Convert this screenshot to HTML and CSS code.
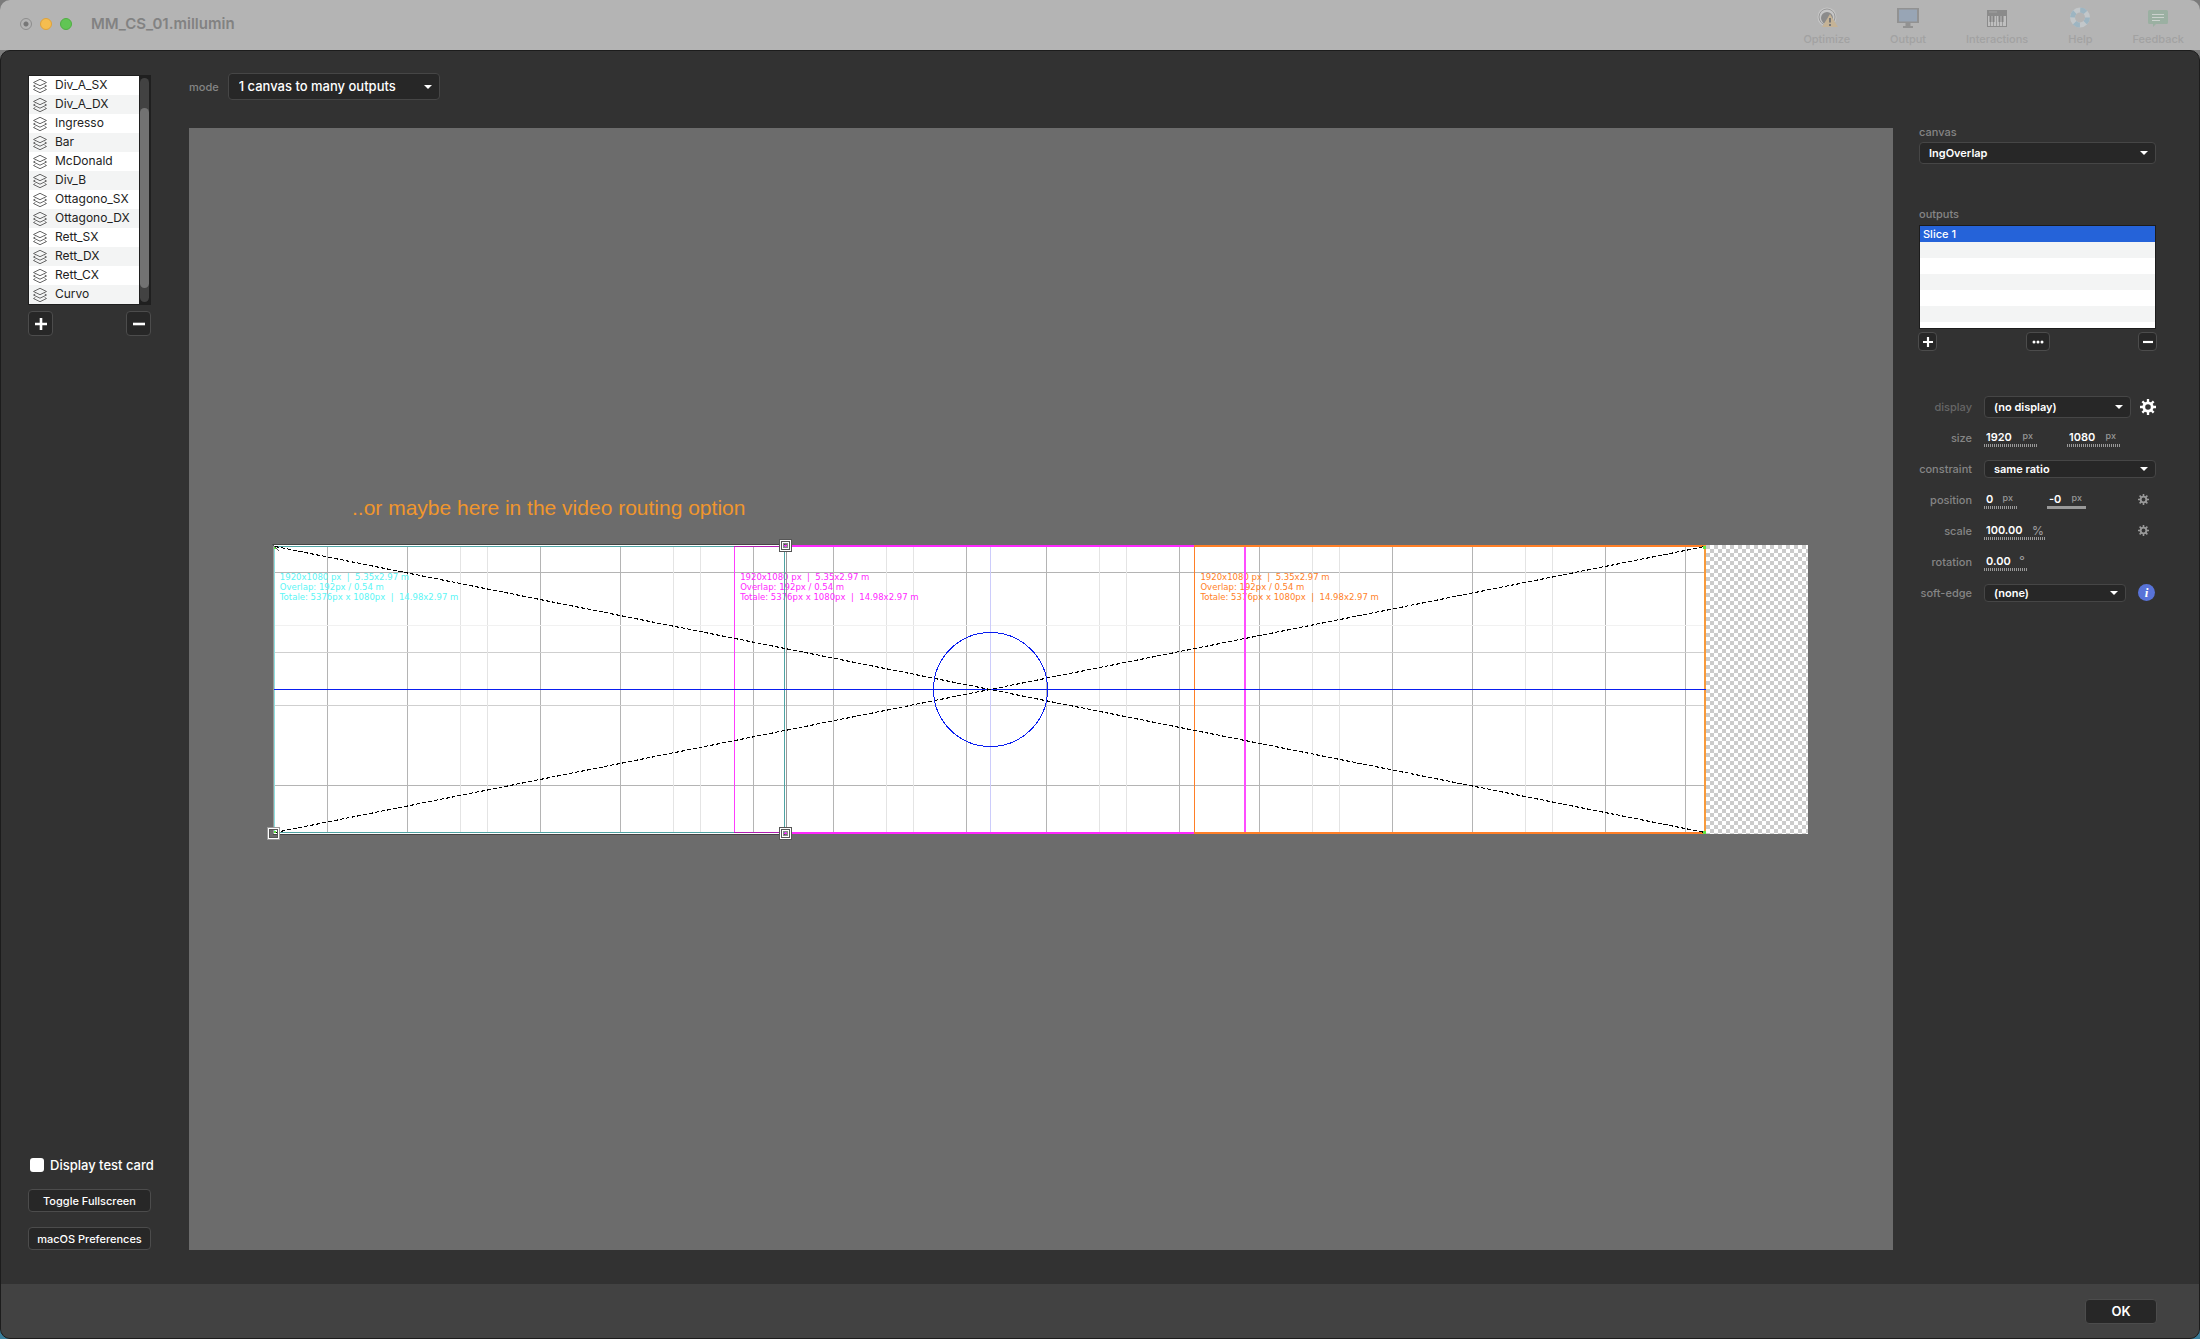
FILE: index.html
```html
<!DOCTYPE html>
<html lang="en">
<head>
<meta charset="utf-8">
<title>MM_CS_01.millumin</title>
<link rel="stylesheet" href="styles.css">
</head>
<body>
<svg class="defs" width="0" height="0" aria-hidden="true">
  <defs>
    <symbol id="layers" viewBox="0 0 16 16">
      <g fill="none" stroke="#666" stroke-width="1">
        <path d="M8 1.300l6.500 3.200L8 7.700 1.500 4.500z"/>
        <path d="M3.300 7L1.500 8 8 11.200 14.500 8l-1.800-1"/>
        <path d="M3.300 10.500l-1.800 1L8 14.700l6.500-3.200-1.800-1"/>
      </g>
    </symbol>
    <symbol id="plus" viewBox="0 0 12 12"><path d="M6 0v12M0 6h12" stroke="#fff" stroke-width="2.600"/></symbol>
    <symbol id="minus" viewBox="0 0 12 12"><path d="M0 6h12" stroke="#fff" stroke-width="2.600"/></symbol>
    <symbol id="gear" viewBox="0 0 16 16">
      <circle cx="8" cy="8" r="4.200" fill="none" stroke="currentColor" stroke-width="2.800"/>
      <path d="M8 0v3M8 13v3M0 8h3M13 8h3M2.340 2.340l2.200 2.200M11.460 11.460l2.200 2.200M13.660 2.340l-2.200 2.200M4.540 11.460l-2.200 2.200" stroke="currentColor" stroke-width="2.300"/>
    </symbol>
    <pattern id="checker" width="8" height="8" patternUnits="userSpaceOnUse">
      <rect width="8" height="8" fill="#fff"/>
      <path d="M0 0h4v4H0zM4 4h4v4H4z" fill="#cbcbcb"/>
    </pattern>
    <symbol id="handle" viewBox="0 0 13 13">
      <g shape-rendering="crispEdges" fill="none">
        <rect x=".5" y=".5" width="12" height="12" stroke="#555"/>
        <rect x="1.500" y="1.500" width="10" height="10" stroke="#fff"/>
        <rect x="2.500" y="2.500" width="8" height="8" stroke="#555"/>
        <rect x="3.500" y="3.500" width="6" height="6" stroke="#fff"/>
        <rect x="4.500" y="4.500" width="4" height="4" stroke="#888"/>
      </g>
    </symbol>
    <symbol id="handle-pale" viewBox="0 0 13 13">
      <g shape-rendering="crispEdges" fill="none">
        <rect x=".5" y=".5" width="12" height="12" stroke="#999"/>
        <rect x="1.500" y="1.500" width="10" height="10" stroke="#fff"/>
        <rect x="2.500" y="2.500" width="8" height="8" stroke="#555"/>
      </g>
    </symbol>
  </defs>
</svg>

<header class="titlebar">
  <div class="lights"><span class="light light-close"></span><span class="light light-min"></span><span class="light light-max"></span></div>
  <h1 class="doc-title">MM_CS_01.millumin</h1>
  <nav class="toolbar">
    <button class="tool" disabled>
      <svg width="24" height="22" viewBox="0 0 24 22"><circle cx="12" cy="10" r="9.500" fill="#c6c6c6"/><circle cx="12" cy="10" r="8" fill="none" stroke="#999" stroke-width="1"/><circle cx="12" cy="11" r="6" fill="#8b8b8b"/><path d="M15 7l8 13H7z" fill="#c5b396"/><path d="M15 11v4.500M15 17v2" stroke="#777" stroke-width="2"/></svg>
      Optimize
    </button>
    <button class="tool" disabled>
      <svg width="24" height="22" viewBox="0 0 24 22"><path d="M1 1h22v15H1z" fill="#929292"/><path d="M3 2.500h18v12H3z" fill="#98a5b5"/><path d="M9.500 16h5v3h2.500v2H7v-2h2.500z" fill="#929292"/></svg>
      Output
    </button>
    <button class="tool" disabled>
      <svg width="24" height="22" viewBox="0 0 24 22"><path d="M2 3h20v17H2z" fill="#8b8b8b"/><path d="M4 5h8" stroke="#a2a2a2"/><path d="M3 9h18v10H3z" fill="#bfbfbf"/><path d="M5.500 9v10M8.500 9v10M11.500 9v10M14.500 9v10M17.500 9v10" stroke="#999"/><path d="M5.500 9v6M8.500 9v6M14.500 9v6M17.500 9v6" stroke="#858585" stroke-width="2"/></svg>
      Interactions
    </button>
    <button class="tool" disabled>
      <svg width="24" height="22" viewBox="0 0 24 22"><circle cx="12" cy="10.500" r="7.500" fill="none" stroke="#c2c7ca" stroke-width="5"/><circle cx="12" cy="10.500" r="7.500" fill="none" stroke="#9db5c2" stroke-width="5" stroke-dasharray="5.890 5.890"/></svg>
      Help
    </button>
    <button class="tool" disabled>
      <svg width="24" height="22" viewBox="0 0 24 22"><path d="M3.500 3h17q1.500 0 1.500 1.500v11q0 1.500-1.500 1.500H10l-3 3v-3H3.500Q2 17 2 15.500v-11Q2 3 3.500 3z" fill="#9bb0a2"/><path d="M6 7.500h12M6 10.500h12M6 13.500h8" stroke="#ccd2ce"/></svg>
      Feedback
    </button>
  </nav>
</header>

<div class="sheet">
  <div class="workspace">
    <aside class="sidebar">
      <div class="layer-box">
        <ul class="layers">
          <li><svg><use href="#layers"/></svg>Div_A_SX</li>
          <li><svg><use href="#layers"/></svg>Div_A_DX</li>
          <li><svg><use href="#layers"/></svg>Ingresso</li>
          <li><svg><use href="#layers"/></svg>Bar</li>
          <li><svg><use href="#layers"/></svg>McDonald</li>
          <li><svg><use href="#layers"/></svg>Div_B</li>
          <li><svg><use href="#layers"/></svg>Ottagono_SX</li>
          <li><svg><use href="#layers"/></svg>Ottagono_DX</li>
          <li><svg><use href="#layers"/></svg>Rett_SX</li>
          <li><svg><use href="#layers"/></svg>Rett_DX</li>
          <li><svg><use href="#layers"/></svg>Rett_CX</li>
          <li><svg><use href="#layers"/></svg>Curvo</li>
        </ul>
        <div class="scroll-track"><div class="scroll-thumb"></div></div>
      </div>
      <div class="button-row">
        <button class="btn btn-square" aria-label="Add canvas"><svg width="12" height="12"><use href="#plus"/></svg></button>
        <button class="btn btn-square" aria-label="Remove canvas"><svg width="12" height="12"><use href="#minus"/></svg></button>
      </div>
      <div class="sidebar-foot">
        <label class="check"><input type="checkbox">Display test card</label>
        <button class="btn btn-wide">Toggle Fullscreen</button>
        <button class="btn btn-wide">macOS Preferences</button>
      </div>
    </aside>

    <main class="center">
      <div class="mode">
        <label class="caption" for="mode">mode</label>
        <span class="select select-mode"><select id="mode"><option>1 canvas to many outputs</option></select></span>
      </div>
      <div class="stage">
        <div class="card">
          <p class="note">..or maybe here in the video routing option</p>
          <svg class="card-art" viewBox="0 0 1534 289">
            <g shape-rendering="crispEdges">
              <rect x="1432" width="102" height="289" fill="url(#checker)"/>
              <rect width="1432" height="289" fill="#fff"/>
              <g fill="none" stroke="#b4b4b4">
                <path d="M0 27.500h1432M0 240.500h1432"/>
                <path d="M53.500 1v287M133.500 1v287M266.500 1v287M346.500 1v287M479.500 1v287M559.500 1v287M692.500 1v287M772.500 1v287M905.500 1v287M985.500 1v287M1118.500 1v287M1198.500 1v287M1331.500 1v287M1411.500 1v287"/>
                <path stroke="#cfcfcf" d="M0 107.500h1432M0 160.500h1432"/>
                <path stroke="#e4e4e4" d="M186.500 1v287M213.500 1v287M399.500 1v287M426.500 1v287M612.500 1v287M639.500 1v287M825.500 1v287M852.500 1v287M1038.500 1v287M1065.500 1v287M1251.500 1v287M1278.500 1v287"/>
                <path stroke="#f1f1f1" d="M0 80.500h1432"/>
              </g>
              <path d="M716.500 0v289" stroke="#ccccfb"/>
            </g>
            <svg class="labels" width="1432" height="288" viewBox="0 0 5376 1081">
              <g class="label-cyan">
                <text x="22" y="131">1920x1080 px  |  5.35x2.97 m</text>
                <text x="22" y="169">Overlap: 192px / 0.54 m</text>
                <text x="22" y="207">Totale: 5376px x 1080px  |  14.98x2.97 m</text>
              </g>
              <g class="label-magenta">
                <text x="1750" y="131">1920x1080 px  |  5.35x2.97 m</text>
                <text x="1750" y="169">Overlap: 192px / 0.54 m</text>
                <text x="1750" y="207">Totale: 5376px x 1080px  |  14.98x2.97 m</text>
              </g>
              <g class="label-orange">
                <text x="3478" y="131">1920x1080 px  |  5.35x2.97 m</text>
                <text x="3478" y="169">Overlap: 192px / 0.54 m</text>
                <text x="3478" y="207">Totale: 5376px x 1080px  |  14.98x2.97 m</text>
              </g>
            </svg>
            <g shape-rendering="crispEdges" fill="none">
              <path d="M460.500 287V1.500" stroke="#ff3cff"/>
              <path d="M460 1h512M460 288h512" stroke="#ff28ff" stroke-width="2"/>
              <path d="M460 1.500h51M460 287.500h51" stroke="#b01cb0"/>
              <path d="M971 0v289" stroke="#ff4cff" stroke-width="2"/>
              <path d="M1431 1H921M921 288h510" stroke="#ff7f27" stroke-width="2"/>
              <path d="M920.500 0v289" stroke="#ff7f27"/>
              <path d="M1431 0v289" stroke="#f79a3c" stroke-width="2"/>
              <path d="M460 1.500H0M0 287.500h460M510.500 1v287" stroke="#4fa3a3"/>
              <path d="M.5 1v287" stroke="#8ee0e0"/>
              <path d="M512.500 1v287" stroke="#9a9a9a"/>
              <path d="M0 .5h510M0 288.500h510" stroke="#fff"/>
              <path d="M-1-.5h512M-1 289.500h512" stroke="#444"/>
              <path d="M-.5 0v289" stroke="#999"/>
              <path d="M0 144.500h1432" stroke="#0a1ef0"/>
              <path d="M1 1.500l1430 286M1 287.500L1431 1.500" stroke="#000" stroke-dasharray="4 2"/>
              <circle cx="716.500" cy="144.500" r="57" stroke="#0a1ef0"/>
            </g>
            <path d="M1429 1h3v3h-3zM1429 286h3v3h-3zM0 2h2v2H0zM0 286h2v2H0z" fill="#5fe640"/>
            <path d="M-2-1l7 7" stroke="#555"/>
            <use href="#handle" x="505" y="-6" width="13" height="13"/>
            <use href="#handle" x="505" y="282" width="13" height="13"/>
            <use href="#handle-pale" x="-7" y="282" width="13" height="13"/>
          </svg>
        </div>
      </div>
    </main>

    <aside class="inspector">
      <div class="field-stack">
        <label class="caption" for="canvas">canvas</label>
        <span class="select select-tall"><select id="canvas"><option>IngOverlap</option></select></span>
      </div>
      <div class="field-stack outputs">
        <span class="caption">outputs</span>
        <ul class="output-list"><li class="selected">Slice 1</li><li></li><li></li><li></li><li></li><li></li></ul>
        <div class="button-row output-buttons">
          <button class="btn btn-small" aria-label="Add output"><svg width="10" height="10"><use href="#plus"/></svg></button>
          <button class="btn btn-small btn-more" aria-label="More"><svg width="12" height="4" viewBox="0 0 12 4"><path d="M2 2h0M6 2h0M10 2h0" stroke="#fff" stroke-width="3" stroke-linecap="round"/></svg></button>
          <button class="btn btn-small" aria-label="Remove output"><svg width="10" height="10"><use href="#minus"/></svg></button>
        </div>
      </div>
      <form class="props">
        <div class="prop"><label class="caption dim" for="display">display</label><div class="value"><span class="select select-tall w-display"><select id="display"><option>(no display)</option></select></span><button type="button" class="icon-btn big" aria-label="Display settings"><svg width="16" height="16"><use href="#gear"/></svg></button></div></div>
        <div class="prop"><label class="caption" for="sw">size</label><div class="value pair-wide"><span class="num n4"><input id="sw" value="1920"><i>px</i></span><span class="num n4"><input value="1080" aria-label="height"><i>px</i></span></div></div>
        <div class="prop"><label class="caption" for="constraint">constraint</label><div class="value"><span class="select select-full"><select id="constraint"><option>same ratio</option></select></span></div></div>
        <div class="prop"><label class="caption" for="px">position</label><div class="value pair-wide"><span class="num n1"><input id="px" value="0"><i>px</i></span><span class="num n2 solid"><input value="-0" aria-label="y position"><i>px</i></span><button type="button" class="icon-btn" aria-label="Position options"><svg width="11" height="11"><use href="#gear"/></svg></button></div></div>
        <div class="prop"><label class="caption" for="scale">scale</label><div class="value"><span class="num n6"><input id="scale" value="100.00"><i class="pct">%</i></span><button type="button" class="icon-btn" aria-label="Scale options"><svg width="11" height="11"><use href="#gear"/></svg></button></div></div>
        <div class="prop"><label class="caption" for="rot">rotation</label><div class="value"><span class="num n3"><input id="rot" value="0.00"><i class="deg">°</i></span></div></div>
        <div class="prop"><label class="caption" for="soft">soft-edge</label><div class="value"><span class="select w-soft"><select id="soft"><option>(none)</option></select></span><button type="button" class="info" aria-label="About soft-edge">i</button></div></div>
      </form>
    </aside>
  </div>
  <footer class="footer"><button class="btn btn-ok">OK</button></footer>
</div>
</body>
</html>
```

FILE: styles.css
```css
* { box-sizing: border-box; }

body {
  margin: 0;
  min-height: 100vh;
  display: flex;
  flex-direction: column;
  background: linear-gradient(#7b7b7b 50%, #3a7f9c 50%);
  color: #fff;
  font: 500 11px/16px Inter, "Liberation Sans", sans-serif;
}

ul, p, h1 { margin: 0; padding: 0; list-style: none; }
button, input, select { font: inherit; color: inherit; margin: 0; padding: 0; }
svg { display: block; overflow: visible; }
.defs { position: absolute; }

/* Title bar */
.titlebar {
  height: 50px;
  flex: none;
  display: flex;
  align-items: center;
  padding: 0 16px 2px 20px;
  background: #b4b4b4;
  border-radius: 10px 10px 0 0;
}
.lights { display: flex; gap: 8px; }
.light { width: 12px; height: 12px; border-radius: 50%; border: 1px solid #8d8d8d; }
.light-close { background: radial-gradient(circle, #777 2px, transparent 3px); }
.light-min { background: #f5bd4f; border-color: #dfa23a; }
.light-max { background: #61c554; border-color: #4fae42; }
.doc-title { margin-left: 19px; font-size: 15px; line-height: 20px; font-weight: 600; color: #828282; }
.toolbar { margin-left: auto; display: flex; gap: 40px; }
.tool {
  display: flex;
  flex-direction: column;
  align-items: center;
  gap: 3px;
  padding-top: 5px;
  border: 0;
  background: none;
  color: #a2a2a2;
  font-size: 11px;
  line-height: 14px;
}

/* Sheet */
.sheet {
  flex: 1;
  display: flex;
  flex-direction: column;
  background: #323232;
  border: 1px solid #1c1c1c;
  border-radius: 10px;
  overflow: hidden;
}
.workspace { flex: 1; display: flex; }
.footer {
  height: 54px;
  flex: none;
  display: flex;
  justify-content: flex-end;
  align-items: center;
  padding-right: 42px;
  background: #424242;
}

/* Controls */
.btn {
  display: flex;
  align-items: center;
  justify-content: center;
  background: #272727;
  border: 1px solid #4c4c4c;
  border-radius: 4px;
}
.btn-square { width: 25px; height: 25px; }
.btn-small { width: 19px; height: 19px; }
.btn-more { width: 24px; }
.btn-wide { width: 100%; height: 23px; font-size: 11px; }
.btn-ok { width: 72px; height: 25px; font-size: 13px; font-weight: 600; }
.button-row { display: flex; justify-content: space-between; }
.caption { color: #858585; font-size: 11px; }
.dim { color: #666; }

.select { position: relative; display: block; height: 18px; }
.select select {
  width: 100%;
  height: 100%;
  padding: 0 20px 0 9px;
  appearance: none;
  background: #272727;
  border: 1px solid #464646;
  border-radius: 4px;
  font-weight: 600;
}
.select::after {
  content: "";
  position: absolute;
  right: 8px;
  top: calc(50% - 2px);
  border: 4px solid transparent;
  border-top-color: #fff;
  border-bottom: 0;
  pointer-events: none;
}
.select-tall { height: 22px; }
.select-full { width: 100%; }
.select-mode { width: 212px; height: 27px; font-size: 13px; }
.select-mode select { padding: 0 20px 2px 10px; font-weight: 500; }

/* Sidebar */
.sidebar { width: 123px; margin: 24px 38px 34px 27px; display: flex; flex-direction: column; }
.layer-box { display: flex; padding: 1px; background: #1f1f1f; }
.layers { flex: 1; background: #fff; color: #222; }
.layers li { display: flex; align-items: center; height: 19px; padding: 0 0 1px 3px; gap: 7px; font-size: 12px; font-weight: 400; white-space: nowrap; }
.layers li:nth-child(even) { background: #f3f4f4; }
.layers svg { width: 16px; height: 16px; flex: none; margin-top: 2px; }
.scroll-track { width: 9px; margin: 2px 1px; padding-top: 30px; border-radius: 5px; background: #424242; }
.scroll-thumb { height: 180px; border-radius: 5px; background: #727272; }
.sidebar > .button-row { margin-top: 6px; }
.sidebar-foot { margin-top: auto; display: flex; flex-direction: column; gap: 15px; }
.check { display: flex; align-items: center; gap: 6px; padding-left: 2px; height: 18px; font-size: 13px; white-space: nowrap; }
.check input { appearance: none; flex: none; width: 14px; height: 14px; border-radius: 3px; background: #fff; }

/* Stage */
.center { flex: 1; min-width: 0; display: flex; flex-direction: column; padding: 22px 0 34px; }
.mode { display: flex; align-items: center; gap: 9px; height: 27px; }
.stage { flex: 1; margin-top: 28px; padding: 0 85px; display: flex; align-items: center; background: #6c6c6c; }
.card { position: relative; width: 100%; }
.card-art { width: 100%; height: auto; }
.note { position: absolute; left: 78px; bottom: calc(100% + 25px); color: #f0962d; font: 21px/24px "Liberation Sans", sans-serif; white-space: nowrap; }
.labels text { font: 32px "DejaVu Sans", sans-serif; white-space: pre; }
.label-cyan { fill: #5cf5f5; }
.label-magenta { fill: #ff28ff; }
.label-orange { fill: #ff7f27; }

/* Inspector */
.inspector { width: 306px; padding: 73px 43px 0 26px; }
.field-stack { display: flex; flex-direction: column; gap: 2px; }
.outputs { margin-top: 42px; gap: 3px; }
.output-list { height: 104px; border: 1px solid #1c1c1c; background: #fff; overflow: hidden; }
.output-list li { height: 16px; padding-left: 3px; }
.output-list li:nth-child(even) { background: #f3f4f4; }
.output-list .selected { background: #2563d9; }
.output-buttons { margin: 0 -1px; }
.props { margin-top: 40px; }
.prop { display: flex; align-items: center; gap: 12px; height: 31px; }
.prop > .caption { width: 53px; flex: none; display: flex; justify-content: flex-end; }
.value { flex: 1; display: flex; align-items: center; }
.pair-wide { gap: 30px; }
.w-display { width: 147px; }
.w-soft { width: 142px; }
.num {
  display: flex;
  justify-content: space-between;
  height: 19px;
  padding: 1px 4px 3px 2px;
  background: repeating-linear-gradient(90deg, #999 0 1px, transparent 1px 2px) bottom / 100% 3px no-repeat;
}
.num.solid { background: linear-gradient(#999, #999) bottom / 100% 3px no-repeat; }
.num input { width: 100%; min-width: 0; height: 15px; border: 0; background: none; outline: 0; font-weight: 600; }
.num i { font-style: normal; font-size: 9px; line-height: 13px; color: #999; }
.num .pct { font-size: 12px; line-height: 17px; margin-right: -3px; }
.num .deg { font-size: 13px; line-height: 17px; margin-right: -2px; }
.n1 { width: 33px; }
.n2 { width: 39px; }
.n3 { width: 43px; }
.n4 { width: 53px; }
.n6 { width: 61px; }
.icon-btn { margin-left: auto; margin-right: 7px; border: 0; background: none; color: #999; }
.icon-btn.big { margin-right: 0; color: #fff; }
.info {
  margin-left: auto;
  width: 17px;
  height: 17px;
  margin-right: 1px;
  border: 0;
  border-radius: 50%;
  background: #5873d8;
  font: italic bold 13px/16px "Liberation Serif", serif;
}
```
